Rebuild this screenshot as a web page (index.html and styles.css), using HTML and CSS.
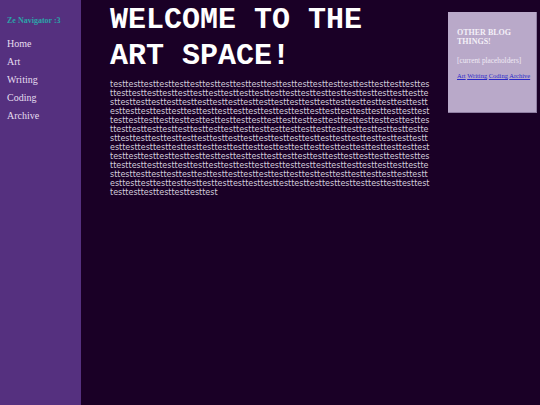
FILE: index.html
```html
<!DOCTYPE html>
<html>
<head>
<meta charset="utf-8">
<link rel="stylesheet" href="styles.css">
</head>
<body>
<nav class="sidebar">
  <div class="nav-title">Ze Navigator :3</div>
  <ul class="nav-links">
    <li><a href="#">Home</a></li>
    <li><a href="#">Art</a></li>
    <li><a href="#">Writing</a></li>
    <li><a href="#">Coding</a></li>
    <li><a href="#">Archive</a></li>
  </ul>
</nav>
<main class="main">
  <h1 class="headline">WELCOME TO THE ART SPACE!</h1>
  <p class="body-text" id="txt"></p>
</main>
<aside class="side-box">
  <h3 class="box-title">OTHER BLOG THINGS!</h3>
  <p class="box-note">[current placeholders]</p>
  <p class="box-links"><a href="#">Art</a> <a href="#">Writing</a> <a href="#">Coding</a> <a href="#">Archive</a></p>
</aside>
<script>
document.getElementById('txt').textContent = 'test'.repeat(256);
</script>
</body>
</html>
```
FILE: styles.css
```css
html, body {
  margin: 0;
  padding: 0;
  height: 100%;
}
body {
  display: flex;
  align-items: flex-start;
  background: #1a0026;
  font-family: "Liberation Serif", serif;
}
.sidebar {
  width: 81px;
  height: 100%;
  flex-shrink: 0;
  background: #55307f;
  padding: 16px 0 0 7px;
  box-sizing: border-box;
}
.nav-title {
  color: #2ba3a8;
  font-weight: bold;
  font-size: 8px;
  line-height: 9px;
}
.nav-links {
  list-style: none;
  margin: 10px 0 0;
  padding: 0;
}
.nav-links li {
  font-size: 10px;
  line-height: 18px;
}
.nav-links a {
  color: #e6def0;
  text-decoration: none;
}
.main {
  flex: 1;
  padding: 0 17px 0 29px;
  min-width: 0;
}
.headline {
  margin: 2px 0 0;
  font-family: "Liberation Mono", monospace;
  font-weight: bold;
  font-size: 30px;
  line-height: 36px;
  color: #ffffff;
}
.body-text {
  margin: 6px 0 0;
  font-family: "DejaVu Sans", sans-serif;
  font-size: 8px;
  line-height: 9px;
  color: #d4cddc;
  word-break: break-all;
}
.side-box {
  width: 89px;
  height: 101px;
  margin: 12px 3px 0 0;
  box-sizing: border-box;
  flex-shrink: 0;
  background: #b9a9c9;
  border-right: 1px solid #8f7ea2;
  border-bottom: 1px solid #8f7ea2;
  padding: 16px 4px 0 9px;
}
.box-title {
  margin: 0;
  font-size: 8px;
  line-height: 9px;
  font-weight: bold;
  color: #f4f0f8;
}
.box-note {
  margin: 10px 0 0;
  font-size: 7.3px;
  line-height: 9px;
  color: #f0eaf5;
}
.box-links {
  margin: 6px 0 0;
  font-size: 6.5px;
  line-height: 9px;
}
.box-links a {
  color: #2a2ac8;
}
```
